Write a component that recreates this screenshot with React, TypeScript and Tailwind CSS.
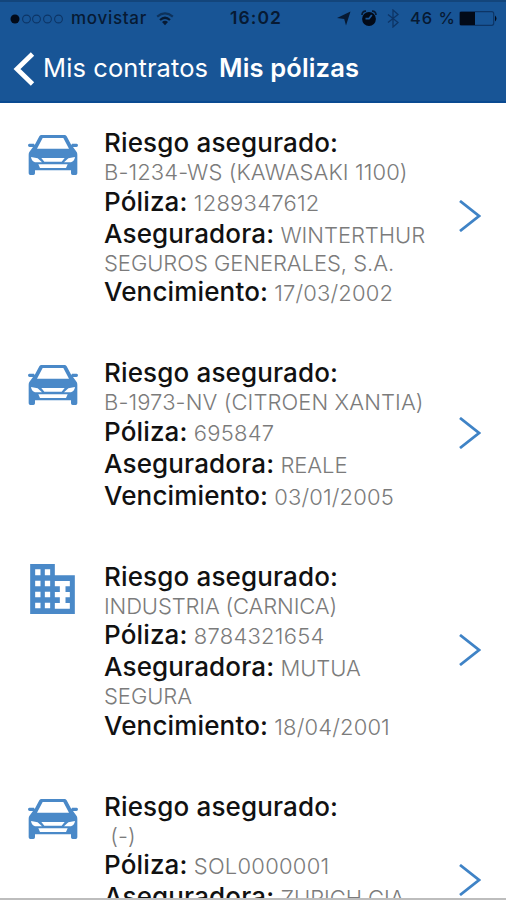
import React from 'react';

type Policy = {
  kind: 'car' | 'building';
  risk: string;
  number: string;
  insurer: string;
  expires?: string;
};

const policies: Policy[] = [
  {
    kind: 'car',
    risk: 'B-1234-WS (KAWASAKI 1100)',
    number: '1289347612',
    insurer: 'WINTERTHUR SEGUROS GENERALES, S.A.',
    expires: '17/03/2002',
  },
  {
    kind: 'car',
    risk: 'B-1973-NV (CITROEN XANTIA)',
    number: '695847',
    insurer: 'REALE',
    expires: '03/01/2005',
  },
  {
    kind: 'building',
    risk: 'INDUSTRIA (CARNICA)',
    number: '8784321654',
    insurer: 'MUTUA SEGURA',
    expires: '18/04/2001',
  },
  {
    kind: 'car',
    risk: '\u00a0(-)',
    number: 'SOL0000001',
    insurer: 'ZURICH CIA',
  },
];

const CarIcon = () => (
  <svg viewBox="0 0 150 120" className="w-[50px] h-10 mt-2 text-[#4a89c8]" fill="currentColor">
    <path
      fillRule="evenodd"
      d="M41 0H109Q114 0 116 4L130 30L132 26H146Q150 26 150 31Q150 36 145 36H135L146 51Q148 54 148 59V115Q148 120 143 120H134Q129 120 129 115V106H21V115Q21 120 16 120H7Q2 120 2 115V59Q2 54 4 51L15 36H5Q0 36 0 31Q0 26 4 26H18L20 30L34 4Q36 0 41 0ZM44 9L27 41H123L106 9ZM9 66L29 70L42 82H21Q11 79 9 66ZM141 66L121 70L108 82H129Q139 79 141 66ZM40 69H110L101 80H49ZM31 88H119L114 99H36Z"
    />
  </svg>
);

const BuildingIcon = () => (
  <svg viewBox="0 0 134 150" className="w-[45px] h-[50px] mt-[3px] ml-0.5 text-[#4a89c8]">
    <path fill="currentColor" d="M0 0H74V34H134V150H0Z" />
    <path
      fill="#fff"
      d="M15 16h16v18h-16zM44 16h16v18h-16zM15 50h16v17h-16zM44 50h16v17h-16zM15 83h16v17h-16zM44 83h16v17h-16zM15 116h16v17h-16zM44 116h16v17h-16zM74 51H119V67H106V84H119V100H106V117H119V134H74V117H89V100H74V84H89V67H74Z"
    />
  </svg>
);

const StatusBar = () => (
  <div className="flex items-center h-[33px] pl-2.5 pr-2 text-[#071a33] text-[16.5px] font-medium">
    <svg width="54" height="12" viewBox="0 0 54 12" className="shrink-0">
      <circle cx="5" cy="6" r="4.5" fill="#020a18" />
      {[17, 27, 38, 49].map((x) => (
        <circle key={x} cx={x - 0.5} cy="6" r="3.9" fill="none" stroke="#0d3566" strokeWidth="1.1" />
      ))}
    </svg>
    <span className="ml-[7px] w-[76px] text-[17px] font-[450] tracking-[0.7px] whitespace-nowrap">movistar</span>
    <svg width="18" height="14" viewBox="0 0 18 14" className="ml-[9px] shrink-0" fill="none" stroke="#071a33" strokeWidth="2.2">
      <path d="M1.2 4.6Q9 -1.8 16.8 4.6" strokeOpacity=".6" />
      <path d="M4 8Q9 3.5 14 8" />
      <path d="M6 10Q9 7.5 12 10L9 13.3Z" fill="#071a33" stroke="none" />
    </svg>
    <span className="ml-14 w-[53px] text-[17.5px] font-semibold tracking-[1.1px] whitespace-nowrap">16:02</span>
    <svg width="14" height="15" viewBox="0 0 14 15" className="ml-[54px] shrink-0" fill="#071a33">
      <path d="M13.5 .5L9 14.5L7.2 8L0 7Z" />
    </svg>
    <svg width="16" height="17" viewBox="0 0 16 17" className="ml-[10px] shrink-0">
      <path d="M1 5Q1 1 5 1.2M15 5Q15 1 11 1.2" stroke="#071a33" strokeWidth="1.7" fill="none" />
      <circle cx="8" cy="9" r="6.9" fill="#020a18" />
      <path d="M4.5 8.7H8L10.8 5" stroke="#1a5698" strokeWidth="1.8" fill="none" />
    </svg>
    <svg width="12" height="19" viewBox="0 0 12 19" className="ml-2.5 shrink-0" fill="none" stroke="#0d3566" strokeWidth="1.3">
      <path d="M1 5.5L11 13.5L6 18V1L11 5.5L1 13.5" />
    </svg>
    <span className="ml-[11px] w-[45px] font-[450] tracking-[1px] whitespace-nowrap">46 %</span>
    <svg width="39" height="15" viewBox="0 0 39 15" className="ml-1 shrink-0">
      <rect x=".7" y=".7" width="34" height="13.6" rx="2" fill="none" stroke="#0d3566" strokeWidth="1.2" />
      <path d="M1 1H16V14H1Z" fill="#020a18" />
      <path d="M36 4.5Q39 7.5 36 10.5Z" fill="#020a18" />
    </svg>
  </div>
);

const Header = () => (
  <header className="h-[103px] shrink-0 bg-[#185596] border-t-2 border-t-[#13457b] border-b-2 border-b-[#0a4a91]">
    <StatusBar />
    <div className="flex items-center h-[67px] pl-[13px] text-white text-[25.5px] tracking-[0.1px]">
      <svg width="22" height="34" viewBox="0 0 22 34" fill="none" stroke="currentColor" strokeWidth="4.8">
        <path d="M19.5 2L4 17L19.5 32" />
      </svg>
      <span className="ml-2 w-[176px] whitespace-nowrap">Mis contratos</span>
      <h1 className="font-semibold whitespace-nowrap tracking-[0.15px]">Mis pólizas</h1>
    </div>
  </header>
);

const Label = ({ children }: { children: React.ReactNode }) => (
  <span className="text-[26px] leading-8 font-medium text-[#111] tracking-[0.15px]">{children}</span>
);

const PolicyRow = ({ policy }: { policy: Policy }) => (
  <li className="flex items-start shrink-0 pl-7 pr-[25px] last:h-[181px]">
    <div className="w-[76px] shrink-0">
      {policy.kind === 'car' ? <CarIcon /> : <BuildingIcon />}
    </div>
    <div className="w-[330px] shrink-0 text-[22px] leading-[26.5px] font-[330] text-[#7b7b7b]">
      <div>
        <Label>Riesgo asegurado:</Label>
        <br />
        <span className={policy.kind === 'building' ? 'tracking-[-0.15px]' : 'tracking-[0.1px]'}>
          {policy.risk}
        </span>
      </div>
      <div>
        <Label>Póliza:</Label> <span className="tracking-[0.25px]">{policy.number}</span>
      </div>
      <div className="tracking-[-0.05px]">
        <Label>Aseguradora:</Label> {policy.insurer}
      </div>
      {policy.expires && (
        <div>
          <Label>Vencimiento:</Label> <span className="tracking-[0.15px]">{policy.expires}</span>
        </div>
      )}
    </div>
    <svg
      viewBox="0 0 22 32"
      className="w-[22px] h-8 shrink-0 ml-auto self-center -mt-[3px]"
      fill="none"
      stroke="#3f83c6"
      strokeWidth="2.8"
    >
      <path d="M1 1L20 16L1 31" />
    </svg>
  </li>
);

export default function App() {
  return (
    <div className="flex flex-col w-[506px] h-[900px] overflow-hidden bg-white border-b-2 border-[#bdbdbd] font-['Inter',sans-serif]">
      <Header />
      <ul className="flex flex-col gap-[49px] pt-6 flex-1 min-h-0 overflow-hidden">
        {policies.map((policy) => (
          <PolicyRow key={policy.number} policy={policy} />
        ))}
      </ul>
    </div>
  );
}
